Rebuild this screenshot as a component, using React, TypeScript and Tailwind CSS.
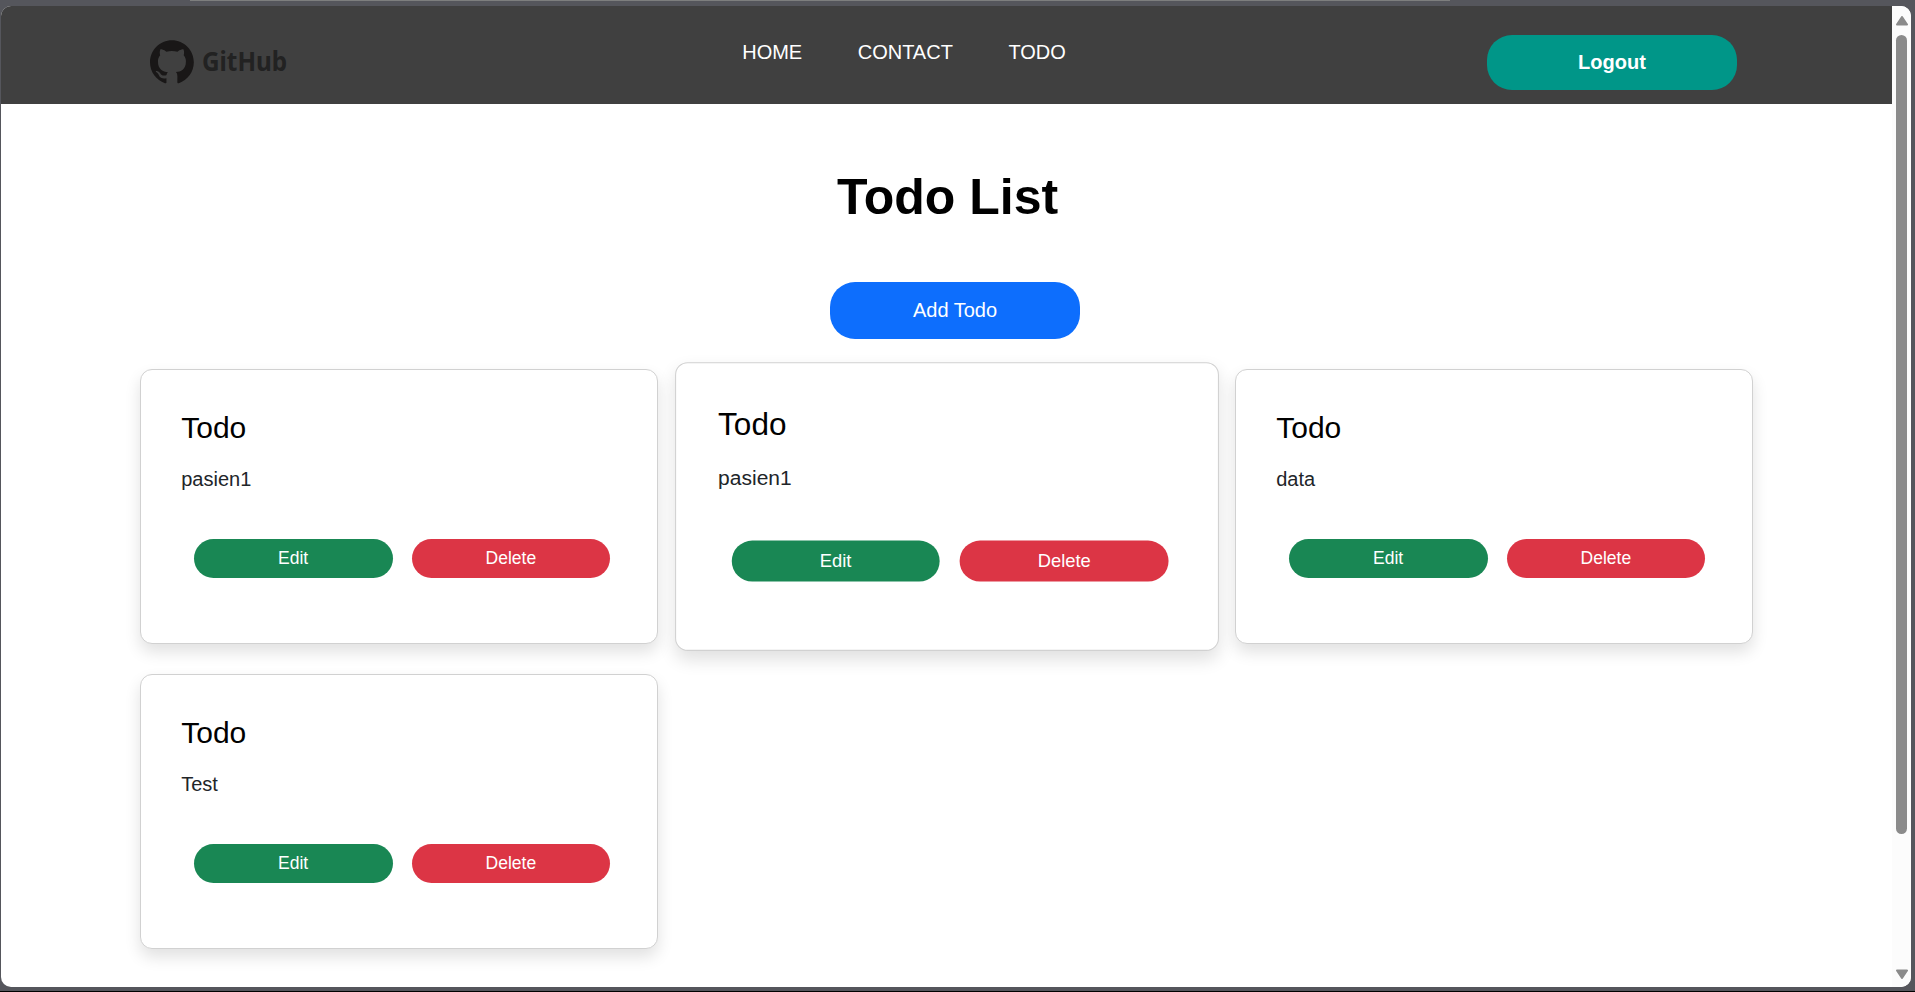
import React from "react";

const OCTOCAT =
  "M48.854 0C21.839 0 0 22 0 49.217c0 21.756 13.993 40.172 33.405 46.69 2.427.49 3.316-1.059 3.316-2.362 0-1.141-.08-5.052-.08-9.127-13.59 2.934-16.42-5.867-16.42-5.867-2.184-5.704-5.42-7.17-5.42-7.17-4.448-3.015.324-3.015.324-3.015 4.934.326 7.523 5.052 7.523 5.052 4.367 7.496 11.404 5.378 14.235 4.074.404-3.178 1.699-5.378 3.074-6.6-10.839-1.141-22.243-5.378-22.243-24.283 0-5.378 1.94-9.778 5.014-13.2-.485-1.222-2.184-6.275.486-13.038 0 0 4.125-1.304 13.426 5.052a46.97 46.97 0 0 1 12.214-1.63c4.125 0 8.33.571 12.213 1.63 9.302-6.356 13.427-5.052 13.427-5.052 2.67 6.763.97 11.816.485 13.038 3.155 3.422 5.015 7.822 5.015 13.2 0 18.905-11.404 23.06-22.324 24.283 1.78 1.548 3.316 4.481 3.316 9.126 0 6.6-.08 11.897-.08 13.526 0 1.304.89 2.853 3.316 2.364 19.412-6.52 33.405-24.935 33.405-46.691C97.707 22 75.788 0 48.854 0z";

function Logo() {
  return (
    <div className="mt-[34px] flex h-[44px] w-[140px] items-center gap-[8px]">
      <svg className="h-[44px] w-[44px] shrink-0" viewBox="0 0 98 97">
        <path d={OCTOCAT} fill="#191717" />
      </svg>
      <span className="origin-left scale-x-[0.9] pb-[3px] font-['Noto_Sans',sans-serif] text-[27px] leading-[40px] font-bold text-[#222222]">
        GitHub
      </span>
    </div>
  );
}

function Header() {
  return (
    <header className="flex h-[98px] items-start justify-between bg-[#404040] pl-[149px] pr-[155px]">
      <Logo />
      <nav className="ml-[31px] flex gap-[55.5px] pt-[31px] text-[20px] leading-[30px] text-white">
        <a>HOME</a>
        <a>CONTACT</a>
        <a>TODO</a>
      </nav>
      <button className="mt-[29px] h-[55px] w-[250px] rounded-[25px] bg-[#009688] pb-[2px] text-[20px] font-bold text-white">
        Logout
      </button>
    </header>
  );
}

type Todo = { text: string; active?: boolean };

const todos: Todo[] = [
  { text: "pasien1" },
  { text: "pasien1", active: true },
  { text: "data" },
  { text: "Test" },
];

function TodoCard({ text, active }: Todo) {
  return (
    <article
      className={
        "h-[275px] rounded-[12px] border border-[#d1d1d1] bg-white px-[40px] pt-[38px] shadow-[0_8px_16px_rgba(0,0,0,0.12)]" +
        (active ? " scale-105" : "")
      }
    >
      <h2 className="text-[30px] leading-[40px] text-black">Todo</h2>
      <p className="mt-[16px] text-[20px] leading-[30px] text-[#212529]">{text}</p>
      <div className="mt-[45px] flex gap-[19px] pl-[12.5px] pr-[6.5px] text-[17.5px] text-white">
        <button className="h-[39px] flex-1 rounded-[20px] bg-[#198754] pb-px">Edit</button>
        <button className="h-[39px] flex-1 rounded-[20px] bg-[#dc3545] pb-px">Delete</button>
      </div>
    </article>
  );
}

function Scrollbar() {
  return (
    <div className="flex w-[19px] shrink-0 flex-col items-center bg-[#fcfcfc]">
      <svg className="mt-[10px] h-[10px] w-[12px]" viewBox="0 0 12 10">
        <path d="M6 1 11 8.5H1Z" fill="#8b8b8b" stroke="#8b8b8b" strokeWidth="2" strokeLinejoin="round" />
      </svg>
      <div className="mt-[9px] h-[799px] w-[11px] rounded-full bg-[#8b8b8b]" />
      <svg className="mt-[135px] h-[10px] w-[12px]" viewBox="0 0 12 10">
        <path d="M6 9 11 1.5H1Z" fill="#8b8b8b" stroke="#8b8b8b" strokeWidth="2" strokeLinejoin="round" />
      </svg>
    </div>
  );
}

export default function App() {
  return (
    <div className="flex h-[992px] w-[1915px] flex-col overflow-hidden border-b border-black bg-[#55565c] font-['Liberation_Sans',Arial,sans-serif]">
      <div className="ml-[190px] h-px w-[1260px] shrink-0 bg-[#7d7e7e]" />
      <div className="ml-px mt-[5px] flex h-[981px] w-[1910px] overflow-hidden rounded-[10px] bg-white">
        <main className="min-w-0 flex-1">
          <Header />
          <h1 className="mt-[63px] pl-[2px] text-center text-[50px] font-bold leading-[60px] text-black">
            Todo List
          </h1>
          <div className="mt-[55px] flex justify-center pl-[17px]">
            <button className="h-[57px] w-[250px] rounded-[25px] bg-[#0d6efd] pb-px text-[20px] text-white">
              Add Todo
            </button>
          </div>
          <section className="mx-auto mt-[30px] grid w-[1612.5px] grid-cols-3 gap-[30px]">
            {todos.map((todo, i) => (
              <TodoCard key={i} {...todo} />
            ))}
          </section>
        </main>
        <Scrollbar />
      </div>
    </div>
  );
}
